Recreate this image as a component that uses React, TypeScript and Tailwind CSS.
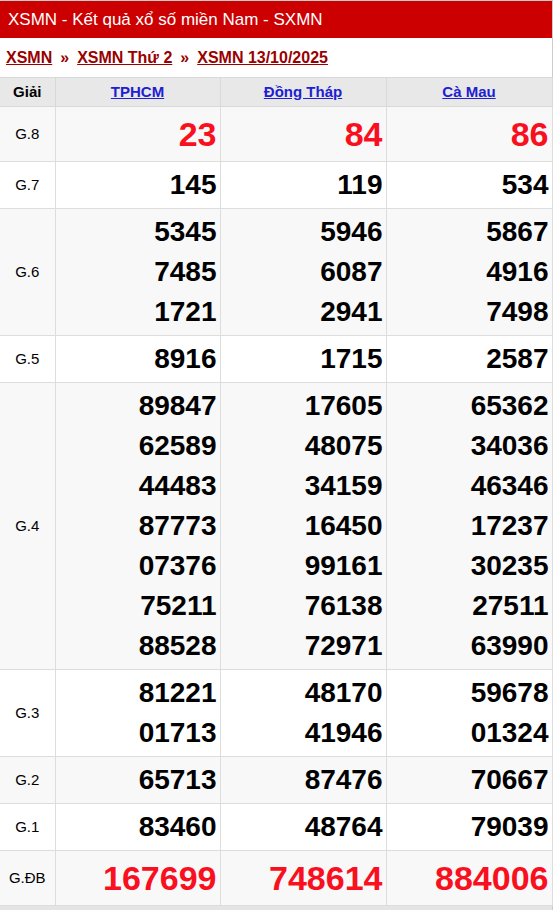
const provinces = ['TPHCM', 'Đồng Tháp', 'Cà Mau'];

type Row = { name: string; values: string[][]; big?: boolean };

const rows: Row[] = [
  { name: 'G.8', big: true, values: [['23'], ['84'], ['86']] },
  { name: 'G.7', values: [['145'], ['119'], ['534']] },
  { name: 'G.6', values: [['5345', '7485', '1721'], ['5946', '6087', '2941'], ['5867', '4916', '7498']] },
  { name: 'G.5', values: [['8916'], ['1715'], ['2587']] },
  {
    name: 'G.4',
    values: [
      ['89847', '62589', '44483', '87773', '07376', '75211', '88528'],
      ['17605', '48075', '34159', '16450', '99161', '76138', '72971'],
      ['65362', '34036', '46346', '17237', '30235', '27511', '63990'],
    ],
  },
  { name: 'G.3', values: [['81221', '01713'], ['48170', '41946'], ['59678', '01324']] },
  { name: 'G.2', values: [['65713'], ['87476'], ['70667']] },
  { name: 'G.1', values: [['83460'], ['48764'], ['79039']] },
  { name: 'G.ĐB', big: true, values: [['167699'], ['748614'], ['884006']] },
];

const App = () => {
  return (
    <div className="w-[554px] bg-white font-['Liberation_Sans',Arial,sans-serif] text-black">
      <div className="w-[553px] border-t border-r border-[#cccccc]">
        {/* title bar */}
        <div className="h-[37px] bg-[#cc0000] pl-2 flex items-center text-white text-[17px]">
          XSMN - Kết quả xổ số miền Nam - SXMN
        </div>

        {/* breadcrumb */}
        <div className="h-[39px] pl-[6px] flex items-center gap-[8px] text-[16px] font-bold text-[#990000]">
          <a href="#" className="underline">XSMN</a>
          <span>»</span>
          <a href="#" className="underline">XSMN Thứ 2</a>
          <span>»</span>
          <a href="#" className="underline">XSMN 13/10/2025</a>
        </div>

        {/* results */}
        <table className="w-[552px] table-fixed border-collapse">
          <colgroup>
            <col className="w-[55px]" />
            <col className="w-[165px]" />
            <col className="w-[166px]" />
            <col className="w-[166px]" />
          </colgroup>
          <thead>
            <tr className="bg-[#e8e8e8] h-[29px]">
              <th className="border border-[#d9d9d9] border-l-0 text-[15px] font-bold">Giải</th>
              {provinces.map((p) => (
                <th key={p} className="border border-[#d9d9d9] text-[15px] font-bold">
                  <a href="#" className="underline text-[#2020d0]">{p}</a>
                </th>
              ))}
            </tr>
          </thead>
          <tbody>
            {rows.map((row, i) => (
              <tr key={row.name} className={i % 2 === 0 ? 'bg-[#f8f8f8]' : 'bg-white'}>
                <td className="border border-[#dddddd] border-l-0 text-center text-[15px]">{row.name}</td>
                {row.values.map((vals, j) => (
                  <td key={j} className="border border-[#dddddd] text-right pr-[3px] py-[3px]">
                    {vals.map((v, k) =>
                      row.big ? (
                        <div key={k} className="text-[34px] leading-[48px] font-bold text-[#f8101e]">{v}</div>
                      ) : (
                        <div key={k} className="text-[28px] leading-[40px] font-bold">{v}</div>
                      ),
                    )}
                  </td>
                ))}
              </tr>
            ))}
          </tbody>
        </table>
        <div className="h-[4px] bg-[#e4e4e4]" />
      </div>
    </div>
  );
};

export default App;
